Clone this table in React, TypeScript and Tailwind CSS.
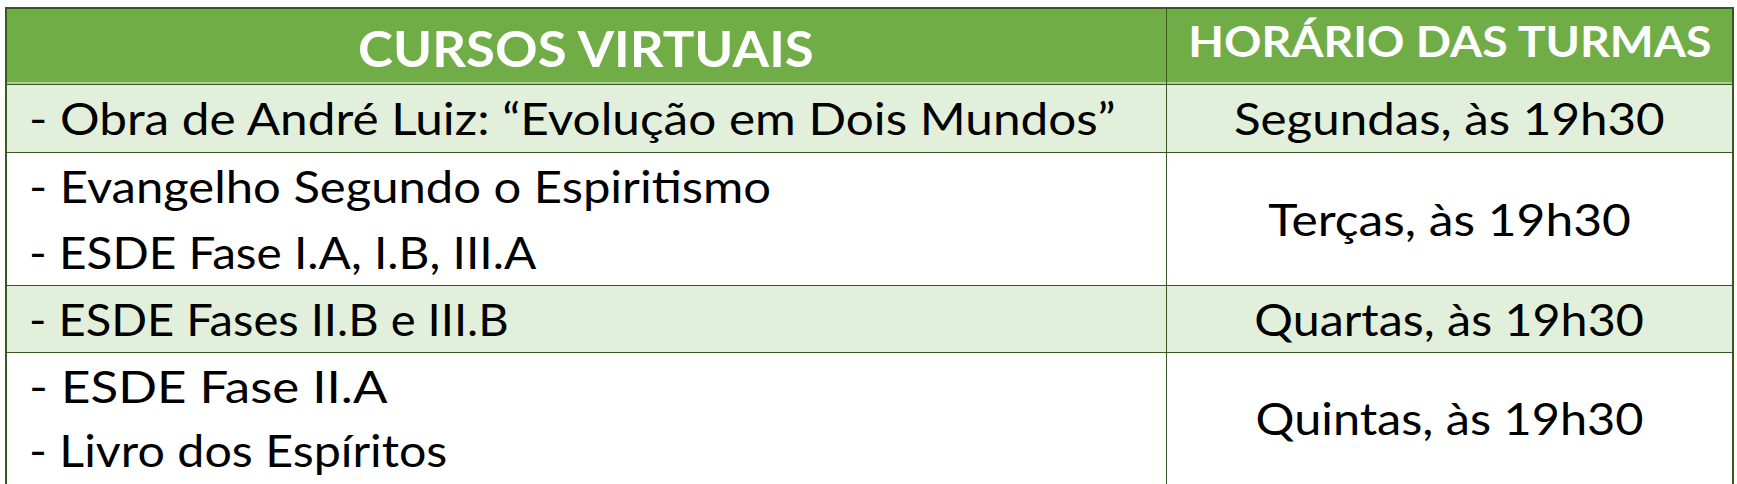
import React from "react";

const B = "border border-[#385723]";

function L({ children, s = "scale-x-[1.13]" }: { children: React.ReactNode; s?: string }) {
  return <span className={`inline-block origin-left whitespace-nowrap ${s}`}>{children}</span>;
}
function C({ children, s = "scale-x-[1.13]" }: { children: React.ReactNode; s?: string }) {
  return <span className={`inline-block origin-center whitespace-nowrap ${s}`}>{children}</span>;
}

export default function App() {
  const font = { fontFamily: "Lato, 'Open Sans', sans-serif" };
  return (
    <div className="bg-white w-[1737px] h-[484px] pl-[5px] pt-[7px]" style={font}>
      <table className="border-collapse border-2 border-[#385723] table-fixed w-[1727px] text-black">
        <colgroup>
          <col className="w-[1160px]" />
          <col className="w-[567px]" />
        </colgroup>
        <tbody>
          <tr className="h-[76px] bg-[#70ad47] text-white font-bold">
            <td className={`${B} text-center text-[50px] leading-none pt-[3px] shadow-[inset_0_-2px_0_#a9d08e]`}>
              <C s="scale-x-[1.055]">CURSOS VIRTUAIS</C>
            </td>
            <td className={`${B} text-center text-[42px] leading-none pb-[10px] shadow-[inset_0_-2px_0_#a9d08e]`}>
              <C s="scale-x-[1.105]">HORÁRIO DAS TURMAS</C>
            </td>
          </tr>
          <tr className="h-[68px] bg-[#e2efda]">
            <td className={`${B} pl-[22px] text-[44px] leading-none`}>
              <L s="scale-x-[1.125]">- Obra de André Luiz: “Evolução em Dois Mundos”</L>
            </td>
            <td className={`${B} text-center text-[44px] leading-none`}>
              <C s="scale-x-[1.12]">Segundas, às 19h30</C>
            </td>
          </tr>
          <tr className="h-[132px] bg-white">
            <td className={`${B} pl-[22px] text-[44px] leading-[66px]`}>
              <div><L s="scale-x-[1.113]">- Evangelho Segundo o Espiritismo</L></div>
              <div><L s="scale-x-[1.085]">- ESDE Fase I.A, I.B, III.A</L></div>
            </td>
            <td className={`${B} text-center text-[44px] leading-none`}>
              <C>Terças, às 19h30</C>
            </td>
          </tr>
          <tr className="h-[67px] bg-[#e2efda]">
            <td className={`${B} pl-[22px] text-[44px] leading-none`}>
              <L s="scale-x-[1.07]">- ESDE Fases II.B e III.B</L>
            </td>
            <td className={`${B} text-center text-[44px] leading-none`}>
              <C s="scale-x-[1.10]">Quartas, às 19h30</C>
            </td>
          </tr>
          <tr className="h-[133px] bg-white">
            <td className={`${B} pl-[22px] text-[44px] leading-[64px]`}>
              <div><L s="scale-x-[1.16]">- ESDE Fase II.A</L></div>
              <div><L s="scale-x-[1.10]">- Livro dos Espíritos</L></div>
            </td>
            <td className={`${B} text-center text-[44px] leading-none`}>
              <C s="scale-x-[1.105]">Quintas, às 19h30</C>
            </td>
          </tr>
        </tbody>
      </table>
    </div>
  );
}
